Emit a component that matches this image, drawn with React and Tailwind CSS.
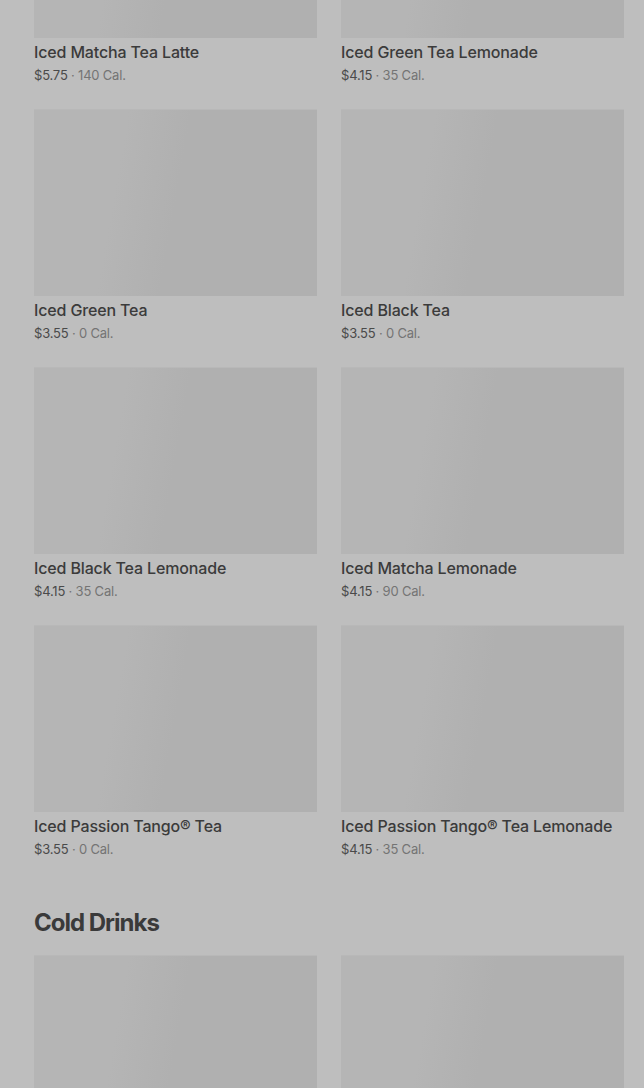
import React from "react";

const teas = [
  { name: "Iced Matcha Tea Latte", price: "$5.75", cal: "140 Cal." },
  { name: "Iced Green Tea Lemonade", price: "$4.15", cal: "35 Cal." },
  { name: "Iced Green Tea", price: "$3.55", cal: "0 Cal." },
  { name: "Iced Black Tea", price: "$3.55", cal: "0 Cal." },
  { name: "Iced Black Tea Lemonade", price: "$4.15", cal: "35 Cal." },
  { name: "Iced Matcha Lemonade", price: "$4.15", cal: "90 Cal." },
  { name: "Iced Passion Tango® Tea", price: "$3.55", cal: "0 Cal." },
  { name: "Iced Passion Tango® Tea Lemonade", price: "$4.15", cal: "35 Cal." },
];

const Placeholder = () => (
  <div className="h-[187px] w-full bg-[linear-gradient(100deg,#b5b5b5_0%,#b5b5b5_30%,#b0b0b0_50%,#b0b0b0_100%)] border-t border-[#b8b8b8]" />
);

const ProductCard = ({ item }) => (
  <div className="flex flex-col">
    <Placeholder />
    <p className="mt-[2px] text-[16px] leading-6 font-medium text-[#3b3b3b] tracking-[-0.15px]">
      {item.name}
    </p>
    <p className="mt-[1px] text-[13px] leading-5 text-[#4a4a4a] tracking-[-0.2px]">
      {item.price}
      <span className="text-[#747474]"> · {item.cal}</span>
    </p>
  </div>
);

const App = () => {
  return (
    <div
      className="h-[1088px] overflow-hidden bg-[#bebebe] pl-[34px] pr-[20px]"
      style={{ fontFamily: "Inter, 'Noto Sans', sans-serif" }}
    >
      <div className="mt-[-149px] grid grid-cols-2 gap-x-6 gap-y-[24px]">
        {teas.map((t) => (
          <ProductCard key={t.name} item={t} />
        ))}
      </div>

      <h2 className="mt-[48px] text-[24px] leading-8 font-bold tracking-[-1px] text-[#3a3a3a]">
        Cold Drinks
      </h2>

      <div className="mt-[16px] grid grid-cols-2 gap-x-6">
        <Placeholder />
        <Placeholder />
      </div>
    </div>
  );
};

export default App;
